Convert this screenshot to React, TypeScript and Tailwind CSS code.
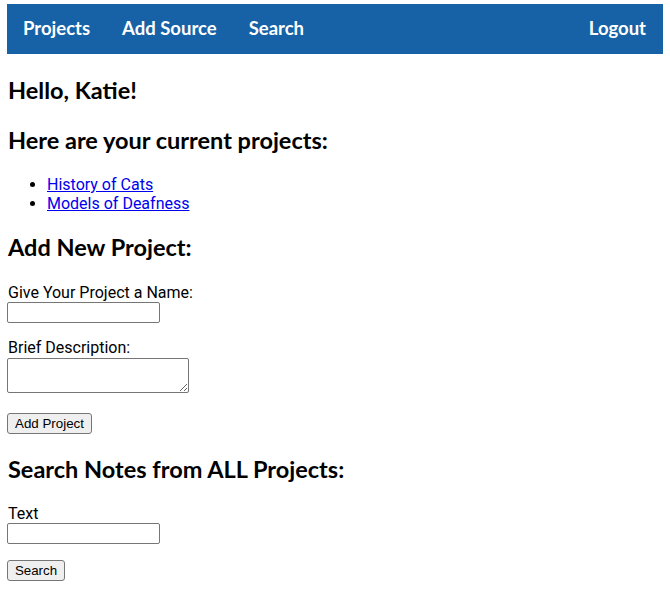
export default function App() {
  const heading = "font-['Lato',sans-serif] font-bold text-[23.5px] leading-[32px] text-black";
  const label = "text-[16px] leading-[19px] text-black";
  return (
    <div className="bg-white min-h-[611px] px-[7px] pt-[4px] font-['Roboto',sans-serif]">
      <nav className="h-[50px] bg-[#1762a6] flex items-center pl-[16px] pr-[17px] font-['Lato',sans-serif] font-bold text-[18.5px] text-white">
        <a className="mr-[32px]">Projects</a>
        <a className="mr-[32px]">Add Source</a>
        <a>Search</a>
        <a className="ml-auto">Logout</a>
      </nav>
      <div className="pl-[1px]">
        <h2 className={`${heading} mt-[20px]`}>Hello, Katie!</h2>
        <h2 className={`${heading} mt-[18px]`}>Here are your current projects:</h2>
        <ul className="list-disc pl-[39px] mt-[19px] text-[16px] leading-[19px]">
          <li><a className="text-[#0000ee] underline">History of Cats</a></li>
          <li><a className="text-[#0000ee] underline">Models of Deafness</a></li>
        </ul>
        <h2 className={`${heading} mt-[18px]`}>Add New Project:</h2>
        <div className={`${label} mt-[20px]`}>Give Your Project a Name:</div>
        <input type="text" className="block -ml-[1px] w-[153px] h-[21px] border border-[#767676] rounded-[2px] bg-white" />
        <div className={`${label} mt-[15px]`}>Brief Description:</div>
        <textarea className="block -ml-[1px] mt-[1px] w-[182px] h-[35px] border border-[#767676] rounded-[2px] bg-white" />
        <button className="block -ml-[1px] mt-[20px] w-[85px] h-[21px] border border-[#767676] rounded-[3px] bg-[#efefef] font-['Liberation_Sans',Arial,sans-serif] text-[13.33px] leading-[15px] text-black">Add Project</button>
        <h2 className={`${heading} mt-[19px]`}>Search Notes from ALL Projects:</h2>
        <div className={`${label} mt-[19px]`}>Text</div>
        <input type="text" className="block -ml-[1px] w-[153px] h-[21px] border border-[#767676] rounded-[2px] bg-white" />
        <button className="block -ml-[1px] mt-[16px] w-[58px] h-[21px] border border-[#767676] rounded-[3px] bg-[#efefef] font-['Liberation_Sans',Arial,sans-serif] text-[13.33px] leading-[15px] text-black">Search</button>
      </div>
    </div>
  );
}
